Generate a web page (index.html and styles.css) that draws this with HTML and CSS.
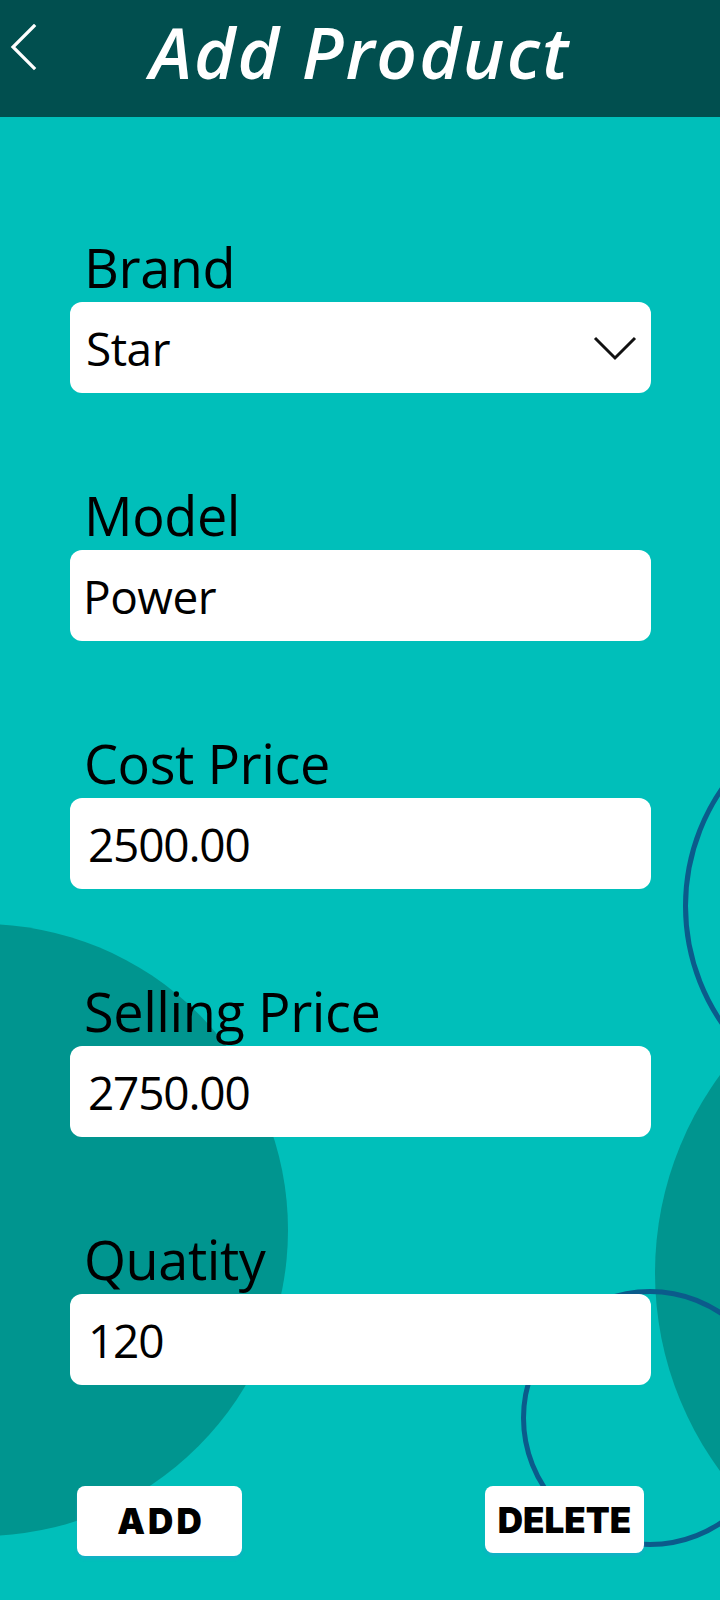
FILE: index.html
```html
<!DOCTYPE html>
<html lang="en">
<head>
<meta charset="utf-8">
<title>Add Product</title>
<link rel="stylesheet" href="styles.css">
</head>
<body>
<div class="screen">
  <div class="decor">
    <div class="blob blob-left"></div>
    <div class="blob blob-right"></div>
    <div class="ring ring-top"></div>
    <div class="ring ring-bottom"></div>
  </div>

  <header class="topbar">
    <div class="back">
      <svg width="30" height="48" viewBox="0 0 30 48" aria-hidden="true">
        <polyline points="24,2 3,23 24,44" fill="none" stroke="#ffffff" stroke-width="3.2" stroke-linecap="square" stroke-linejoin="miter"/>
      </svg>
    </div>
    <h1 class="title">Add Product</h1>
    <div></div>
  </header>

  <main class="form">
    <div class="field">
      <div class="label">Brand</div>
      <div class="box select">
        <span class="value">Star</span>
        <svg class="caret" width="44" height="26" viewBox="0 0 44 26" aria-hidden="true">
          <polyline points="2,3 22,23 42,3" fill="none" stroke="#111111" stroke-width="3"/>
        </svg>
      </div>
    </div>
    <div class="field">
      <div class="label">Model</div>
      <div class="box"><span class="value value-tight">Power</span></div>
    </div>
    <div class="field">
      <div class="label">Cost Price</div>
      <div class="box"><span class="value value-num">2500.00</span></div>
    </div>
    <div class="field">
      <div class="label">Selling Price</div>
      <div class="box"><span class="value value-num">2750.00</span></div>
    </div>
    <div class="field">
      <div class="label">Quatity</div>
      <div class="box"><span class="value value-num">120</span></div>
    </div>
  </main>

  <div class="actions">
    <button class="btn btn-add">ADD</button>
    <button class="btn btn-delete">DELETE</button>
  </div>
</div>
</body>
</html>
```

FILE: styles.css
```css
html, body {
  margin: 0;
  padding: 0;
}

body {
  background: #00bfba;
  font-family: "Open Sans", "Noto Sans", sans-serif;
  color: #000;
}

.screen {
  position: relative;
  width: 720px;
  height: 1600px;
  overflow: hidden;
  background: #00bfba;
}

.decor {
  position: absolute;
  inset: 0;
  z-index: 0;
}

.blob {
  position: absolute;
  border-radius: 50%;
  background: #00958f;
}

.blob-left {
  left: -324px;
  top: 924px;
  width: 612px;
  height: 612px;
}

.blob-right {
  left: 655px;
  top: 939px;
  width: 668px;
  height: 668px;
}

.ring {
  position: absolute;
  border-radius: 50%;
  border: 5px solid #0b5b8b;
  box-sizing: border-box;
}

.ring-top {
  left: 683px;
  top: 697px;
  width: 418px;
  height: 418px;
}

.ring-bottom {
  left: 521px;
  top: 1289px;
  width: 258px;
  height: 258px;
}

.topbar {
  position: relative;
  z-index: 1;
  height: 117px;
  background: #014f4f;
  display: grid;
  grid-template-columns: 1fr auto 1fr;
  align-items: start;
}

.back {
  padding: 24px 0 0 10px;
  line-height: 0;
}

.title {
  margin: 0;
  padding-top: 17px;
  font-family: "Open Sans", sans-serif;
  font-style: italic;
  font-weight: 600;
  font-size: 71px;
  line-height: 70px;
  letter-spacing: 2px;
  color: #ffffff;
  white-space: nowrap;
}

.form {
  position: relative;
  z-index: 1;
  margin: 0 69px 0 70px;
  padding-top: 120px;
  display: flex;
  flex-direction: column;
  gap: 92px;
}

.field {
  display: flex;
  flex-direction: column;
}

.label {
  padding-left: 14px;
  font-size: 54px;
  line-height: 60px;
  height: 60px;
  letter-spacing: -0.4px;
  margin-bottom: 5px;
}

.box {
  height: 91px;
  background: #ffffff;
  border-radius: 12px;
  display: flex;
  align-items: center;
  padding: 0 14px 0 16px;
}

.value {
  font-size: 46px;
  line-height: 1;
  letter-spacing: -0.5px;
  padding-top: 0;
}

.value-tight {
  margin-left: -3px;
}

.value-num {
  margin-left: 2px;
  letter-spacing: -1.2px;
}

.select {
  justify-content: space-between;
}

.caret {
  display: block;
  margin-right: 0;
}

.actions {
  position: relative;
  z-index: 1;
  display: flex;
  justify-content: space-between;
  align-items: flex-start;
  margin: 101px 76px 0 77px;
}

.btn {
  border: 0;
  background: #ffffff;
  border-radius: 8px;
  font-family: "Inter", "Lato", sans-serif;
  font-weight: 900;
  font-size: 35px;
  color: #000;
  padding: 0;
  display: flex;
  align-items: center;
  justify-content: center;
  box-shadow: 0 3px 3px rgba(40, 160, 210, 0.45);
}

.btn-add {
  width: 165px;
  height: 70px;
  letter-spacing: 3px;
  padding-left: 3px;
}

.btn-delete {
  width: 159px;
  height: 67px;
  letter-spacing: 0;
}
```
